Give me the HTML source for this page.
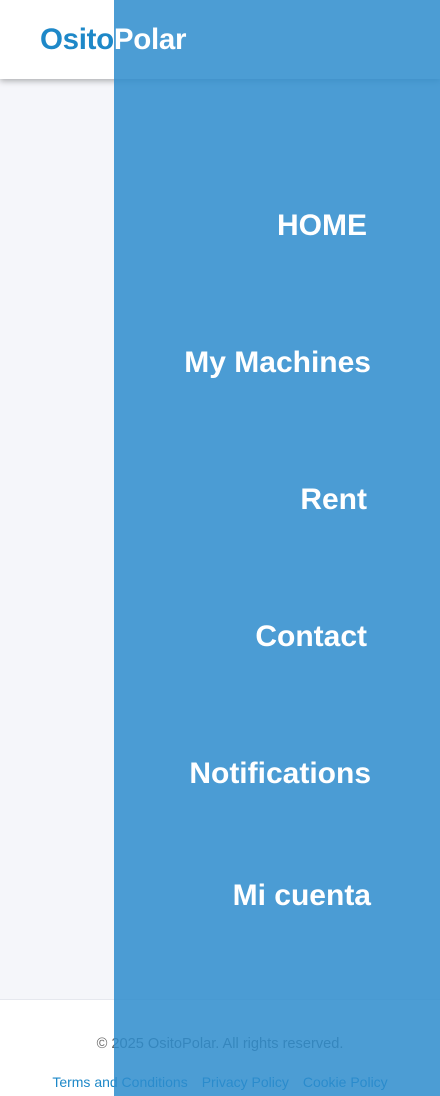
<!DOCTYPE html>
<html><head><style>
*{margin:0;padding:0;box-sizing:border-box}
body{width:440px;height:1096px;position:relative;overflow:hidden;font-family:"Liberation Sans",sans-serif;background:#f5f6fa}
.hdr{position:absolute;top:0;left:0;width:440px;height:79px;background:#fff;box-shadow:0 2px 6px rgba(0,0,0,.3)}
.logo{position:absolute;left:40px;top:23px;font-size:29.5px;font-weight:bold;color:#1e88c8;letter-spacing:-0.3px;white-space:nowrap}
.foot{position:absolute;top:999px;left:0;width:440px;height:97px;background:#fff;border-top:1px solid #e6e8ee}
.copy{position:absolute;top:36px;width:100%;text-align:center;font-size:14.6px;color:#666}
.links{position:absolute;top:74px;width:100%;text-align:center;font-size:14px;color:#1e88c8}
.links span{margin:0 7px}
.ov{position:absolute;left:114px;top:0;width:326px;height:1096px;background:rgba(45,140,205,.85);overflow:hidden}
.ov div.m{position:absolute;right:69px;color:#fff;font-weight:bold;font-size:30px;white-space:nowrap}
.ov .logo2{position:absolute;left:-74px;top:23px;font-size:29.5px;font-weight:bold;color:#fff;letter-spacing:-0.3px;white-space:nowrap}
</style></head><body>
<div class="hdr"><div class="logo">OsitoPolar</div></div>
<div class="foot">
<div class="copy">© 2025 OsitoPolar. All rights reserved.</div>
<div class="links"><span>Terms and Conditions</span><span>Privacy Policy</span><span>Cookie Policy</span></div>
</div>
<div class="ov">
<div class="logo2">OsitoPolar</div>
<div class="m" style="top:209px;right:73px">HOME</div>
<div class="m" style="top:346px">My Machines</div>
<div class="m" style="top:483px;right:73px">Rent</div>
<div class="m" style="top:620px;right:73px">Contact</div>
<div class="m" style="top:757px">Notifications</div>
<div class="m" style="top:879px">Mi cuenta</div>
</div>
</body></html>
